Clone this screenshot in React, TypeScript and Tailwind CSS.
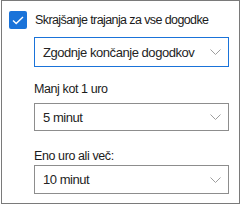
import React from 'react';

const font = { fontFamily: '"Liberation Sans", Arial, sans-serif' };

function Chevron() {
  return (
    <svg width="11" height="6" viewBox="0 0 11 6" fill="none" className="shrink-0">
      <path d="M0.5 0.5L5.5 5.5L10.5 0.5" stroke="#9e9e9e" strokeWidth="1" />
    </svg>
  );
}

function Dropdown({ value, active, h }: { value: string; active?: boolean; h: string }) {
  return (
    <div
      className={`w-[195px] ${h} flex items-center justify-between pl-[8px] pr-[7px] bg-white border ${
        active ? 'border-[#1a73d9]' : 'border-[#8d8d8d]'
      }`}
    >
      <span className="text-[13px] text-[#242424] tracking-[-0.45px] leading-none">{value}</span>
      <Chevron />
    </div>
  );
}

export default function App() {
  return (
    <div className="w-[241px] h-[207px] bg-white" style={font}>
      <div className="ml-[1px] w-[239px] h-[204px] border border-[#7a7a7a] pt-[10px] pl-[7px]">
        <div className="flex items-center gap-[8px] h-[18px]">
          <div className="w-[18px] h-[18px] rounded-[2px] bg-[#1a73d9] flex items-center justify-center">
            <svg width="12" height="9" viewBox="0 0 12 9" fill="none">
              <path d="M1 4.5L4.2 7.6L11 1" stroke="white" strokeWidth="1.4" />
            </svg>
          </div>
          <span className="text-[12.5px] text-[#1b1b1b] tracking-[-0.6px] leading-none">
            Skrajšanje trajanja za vse dogodke
          </span>
        </div>

        <div className="ml-[25px] mt-[8px] flex flex-col">
          <Dropdown value="Zgodnje končanje dogodkov" active h="h-[30px]" />

          <div className="mt-[14px] h-[16px] flex items-center text-[12.5px] text-[#1b1b1b] tracking-[-0.4px]">
            Manj kot 1 uro
          </div>
          <div className="mt-[6px]">
            <Dropdown value="5 minut" h="h-[28px]" />
          </div>

          <div className="mt-[17px] h-[16px] flex items-center text-[12.5px] text-[#1b1b1b] tracking-[-0.4px]">
            Eno uro ali več:
          </div>
          <div className="mt-[1px]">
            <Dropdown value="10 minut" h="h-[29px]" />
          </div>
        </div>
      </div>
    </div>
  );
}
